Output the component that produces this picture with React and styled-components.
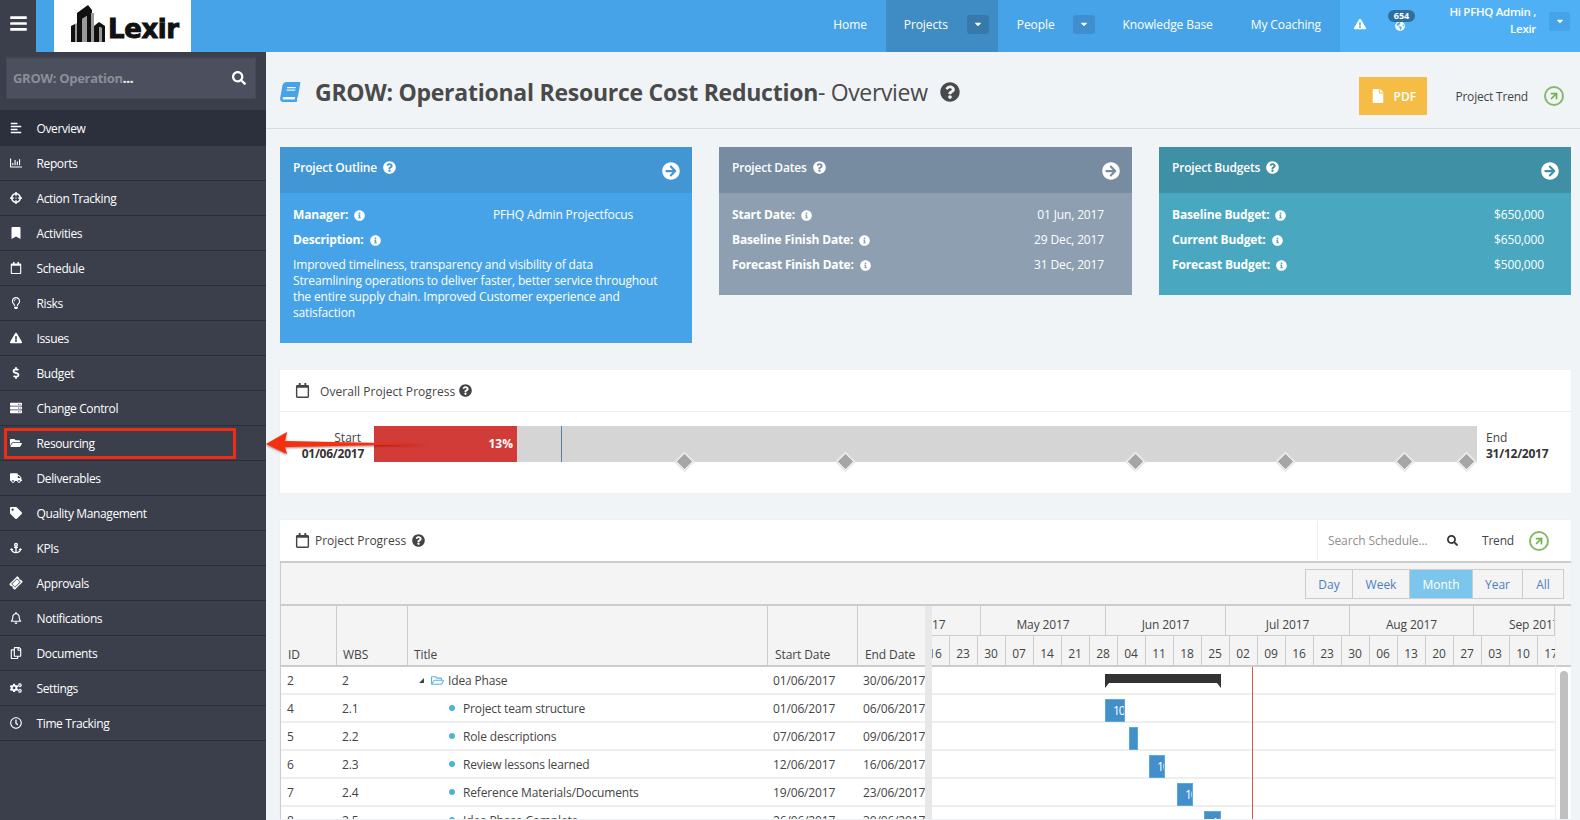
import React from "react";
import styled, { createGlobalStyle } from "styled-components";
import {
  FaAlignLeft, FaAnchor, FaArrowCircleRight, FaBars, FaBook, FaBookmark, FaCaretDown, FaCogs,
  FaCrosshairs, FaDollarSign, FaExclamationTriangle, FaFile, FaFolderOpen, FaGlobeAmericas,
  FaInfoCircle, FaQuestionCircle, FaRegBell, FaRegCalendar, FaRegChartBar, FaRegClock, FaRegCopy,
  FaRegFolderOpen, FaRegLightbulb, FaSearch, FaServer, FaTag, FaTicketAlt, FaTruck,
} from "react-icons/fa";
import { ArrowUpRight } from "lucide-react";

const GlobalStyle = createGlobalStyle`
  html, body { margin: 0; padding: 0; height: 820px; overflow: hidden; }
  body { font-family: "Open Sans", "Liberation Sans", sans-serif; font-size: 12px; color: #444; background: #f1f4f7; }
  * { box-sizing: border-box; }
`;

const Page = styled.div`
  position: relative;
  width: 1580px;
  height: 820px;
  overflow: hidden;
  display: flex;
  flex-direction: column;
`;

const TopBar = styled.header`
  flex: 0 0 52px;
  display: flex;
  background: #47a3e8;
  color: #fff;
`;

const Burger = styled.div`
  width: 36px;
  padding-bottom: 5px;
  background: #3b3f4c;
  display: flex;
  align-items: center;
  justify-content: center;
  font-size: 19px;
`;

const LogoBox = styled.div`
  width: 137px;
  margin-left: 18px;
  background: #fff;
  display: flex;
  align-items: flex-end;
  padding: 0 0 10px 16px;
  gap: 2px;
`;

const LogoText = styled.span`
  font-family: "DejaVu Sans", sans-serif;
  font-weight: 700;
  font-size: 26px;
  line-height: 26px;
  letter-spacing: -0.4px;
  color: #111;
  -webkit-text-stroke: 0.9px #111;
`;

const Nav = styled.nav`
  margin-left: auto;
  display: flex;
`;

const NavItem = styled.div`
  display: flex;
  align-items: center;
  height: 52px;
  padding: ${(p) => (p.$menu ? `0 9px 4px ${p.$active ? 18 : 19}px` : "0 19px 4px")};
  gap: ${(p) => (p.$active ? 19 : 18)}px;
  font-size: 12px;
  letter-spacing: -0.1px;
  background: ${(p) => (p.$active ? "#3f8cc4" : "transparent")};
`;

const CaretButton = styled.span`
  width: 22px;
  height: 19px;
  border-radius: 3px;
  background: ${(p) => (p.$active ? "#3779aa" : "#3f8fd0")};
  display: flex;
  align-items: center;
  justify-content: center;
  font-size: 10px;
`;

const UserZone = styled.div`
  width: 240px;
  padding-bottom: 4px;
  background: #4fb0f5;
  display: flex;
  align-items: center;
`;

const ZoneIcon = styled.span`
  width: 40px;
  padding-top: ${(p) => p.$drop || 0}px;
  display: flex;
  justify-content: center;
  font-size: ${(p) => p.$size}px;
  position: relative;
`;

const Badge = styled.span`
  position: absolute;
  top: -8px;
  left: 8px;
  width: 27px;
  height: 12px;
  border-radius: 7px;
  background: #2f6f9f;
  font-size: 9px;
  font-weight: 700;
  line-height: 12px;
  text-align: center;
`;

const UserName = styled.div`
  width: 116px;
  margin-bottom: 8px;
  text-align: right;
  font-size: 11.5px;
  font-weight: 600;
  line-height: 17px;
  letter-spacing: -0.3px;
`;

const UserCaret = styled(CaretButton)`
  width: 21px;
  margin: 0 0 6px 13px;
  background: #47a3e8;
`;

const Body = styled.div`
  flex: 1;
  display: flex;
  min-height: 0;
`;

const Sidebar = styled.aside`
  width: 266px;
  flex: none;
  background: #3b3f4c;
  padding-top: 5px;
`;

const SearchBox = styled.div`
  margin: 0 10px 0 6px;
  height: 42px;
  background: #4c505e;
  border: 1px solid #454855;
  border-top-width: 2px;
  display: flex;
  align-items: center;
  justify-content: space-between;
  padding: 0 9px 2px 6px;
  color: #fff;
  font-size: 14px;
`;

const SearchText = styled.span`
  font-size: 13px;
  font-weight: 700;
  color: #8b8e97;
  letter-spacing: -0.3px;
  b { color: #e8e8ea; }
`;

const Menu = styled.ul`
  list-style: none;
  margin: 11px 0 0;
  padding: 0;
`;

const MenuItem = styled.li`
  height: ${(p) => (p.$active ? 36 : 35)}px;
  padding: ${(p) => (p.$active ? "1px" : "0")} 0 0 10px;
  display: flex;
  align-items: center;
  color: #fff;
  font-size: 12px;
  letter-spacing: -0.38px;
  background: ${(p) => (p.$active ? "#2c2f3c" : "transparent")};
  border-bottom: 1px solid ${(p) => (p.$active ? "#2c2f3c" : "#2b2e39")};
`;

const MenuIcon = styled.span`
  width: 26.5px;
  flex: none;
  display: flex;
  font-size: 12px;
  svg { transform: rotate(${(p) => p.$tilt || 0}deg); }
`;

const Main = styled.main`
  flex: 1;
  min-width: 0;
`;

const TitleRow = styled.div`
  height: 77px;
  border-bottom: 1px solid #d5dde5;
  display: flex;
  align-items: center;
  padding: 12px 16px 0 14px;
`;

const BookIcon = styled.span`
  display: flex;
  color: #47a3e8;
  font-size: 20px;
  margin: 0 15px 9px 0;
  transform: skewX(-10deg);
`;

const Title = styled.h1`
  margin: 0 0 8px;
  font-size: 23px;
  line-height: 30px;
  font-weight: 400;
  color: #4a4a4a;
  letter-spacing: -0.35px;
  b { font-weight: 700; letter-spacing: -0.25px; }
`;

const TitleHelp = styled.span`
  display: flex;
  margin: 0 0 8px 12px;
  font-size: 20px;
  color: #4a4a4a;
`;

const PdfButton = styled.div`
  margin-left: auto;
  width: 68px;
  height: 38px;
  background: #f6bd46;
  color: #fff;
  font-weight: 600;
  display: flex;
  align-items: center;
  justify-content: center;
  gap: 9px;
  font-size: 12px;
  svg { font-size: 14px; }
`;

const TrendLink = styled.div`
  display: flex;
  align-items: center;
  margin-left: ${(p) => p.$gap}px;
  gap: ${(p) => p.$inner}px;
  color: #444;
  font-size: 12px;
  letter-spacing: -0.2px;
`;

const TrendCircle = styled.span`
  width: 20px;
  height: 20px;
  border: 2px solid #83bb6b;
  border-radius: 50%;
  color: #6fb34f;
  display: flex;
  align-items: center;
  justify-content: center;
`;

const Cards = styled.section`
  display: grid;
  grid-template-columns: 412px 413px 412px;
  gap: 27px;
  align-items: start;
  padding: 18px 9px 0 14px;
`;

const Card = styled.article`
  background: ${(p) => p.$body};
  color: #fff;
  height: ${(p) => p.$height}px;
`;

const CardHead = styled.div`
  height: 46px;
  background: ${(p) => p.$head};
  display: flex;
  justify-content: space-between;
  padding: 13px 12px 0 13px;
  font-weight: 600;
  font-size: 12px;
  letter-spacing: -0.2px;
  line-height: 16px;
`;

const HelpLabel = styled.span`
  display: flex;
  align-items: center;
  height: 16px;
  gap: 6px;
  svg { font-size: 13px; margin-top: -2px; }
`;

const ArrowIcon = styled.span`
  display: flex;
  font-size: 18px;
  margin-top: 2px;
`;

const CardBody = styled.div`
  padding: 13px ${(p) => p.$right || 28}px 0 13px;
  letter-spacing: -0.15px;
`;

const InfoRow = styled.div`
  display: flex;
  justify-content: space-between;
  height: 25px;
  line-height: 18px;
  font-size: 12px;
`;

const InfoLabel = styled.span`
  display: flex;
  align-items: center;
  height: 18px;
  gap: 6px;
  font-weight: 700;
  width: ${(p) => (p.$wide ? "200px" : "auto")};
  svg { font-size: 11px; }
`;

const InfoValue = styled.span`
  flex: ${(p) => (p.$left ? "1" : "none")};
`;

const CardText = styled.p`
  margin: 1px 0 0;
  line-height: 16px;
  width: 372px;
`;

const Panel = styled.section`
  margin: ${(p) => p.$top}px 9px 0 14px;
  background: #fff;
  box-shadow: 0 0 1px rgba(0, 0, 0, 0.08);
`;

const PanelHead = styled.div`
  height: ${(p) => p.$height}px;
  display: flex;
  align-items: center;
  padding-left: 15px;
  gap: ${(p) => p.$gap}px;
  border-bottom: 1px solid #eceff1;
  font-size: 12px;
  color: #444;
  svg { flex: none; }
`;

const PanelTitle = styled.span`
  padding-top: 2px;
  letter-spacing: 0.05px;
  font-weight: 500;
`;

const CalendarIcon = styled.span`
  display: flex;
  font-size: 15px;
  color: #444;
`;

const SmallHelp = styled.span`
  display: flex;
  font-size: 13px;
  color: #444;
  margin-left: ${(p) => p.$left}px;
`;

const ProgressRow = styled.div`
  height: 81px;
  display: flex;
  padding-top: 14px;
`;

const BarLabel = styled.div`
  width: ${(p) => p.$width}px;
  padding: ${(p) => p.$pad};
  text-align: ${(p) => p.$align};
  line-height: 16px;
  white-space: nowrap;
  b { font-weight: 700; color: #333; letter-spacing: -0.25px; }
`;

const StartWord = styled.span`
  padding-right: 3px;
`;

const ProgressTrack = styled.div`
  width: 1103px;
  height: 36px;
  background: #d5d5d5;
  position: relative;
`;

const ProgressFill = styled.div`
  height: 36px;
  background: #d13b38;
  color: #fff;
  font-weight: 700;
  font-size: 12px;
  line-height: 36px;
  text-align: right;
  padding-right: 4px;
`;

const Tick = styled.span`
  position: absolute;
  top: 0;
  bottom: 0;
  width: 1px;
  background: #5b7f9e;
`;

const Milestone = styled.span`
  position: absolute;
  top: 29px;
  width: 13px;
  height: 13px;
  margin-left: -6.5px;
  background: #a6a6a6;
  border: 1.5px solid #fff;
  outline: 1px solid #e2e2e2;
  transform: rotate(45deg);
`;

const ScheduleHead = styled.div`
  height: 41px;
  display: flex;
  align-items: center;
  padding-left: 15px;
  font-weight: 500;
  color: #444;
`;

const ScheduleTitle = styled.span`
  margin-left: 5px;
  font-size: 12px;
`;

const ScheduleTools = styled.div`
  margin-left: auto;
  width: 254px;
  height: 40px;
  border-left: 1px solid #eceff1;
  padding-left: 10px;
  display: flex;
  align-items: center;
  font-weight: 400;
`;

const Placeholder = styled.span`
  width: 119px;
  color: #8f8f8f;
  font-size: 12px;
  letter-spacing: -0.1px;
  white-space: nowrap;
`;

const ToolSearch = styled.span`
  display: flex;
  font-size: 11px;
  color: #333;
`;

const Grid = styled.div`
  border-top: 2px solid #ccc;
  border-left: 1px solid #ccc;
  height: 258px;
  overflow: hidden;
`;

const Toolbar = styled.div`
  height: 43px;
  background: #f4f4f4;
  border-bottom: 2px solid #ccc;
  display: flex;
  justify-content: flex-end;
  padding: 6px 7px 0 0;
`;

const ViewButton = styled.span`
  height: 30px;
  width: ${(p) => p.$width}px;
  margin-left: -1px;
  border: 1px solid #ccc;
  background: ${(p) => (p.$active ? "#7cc5ec" : "#f4f4f4")};
  color: ${(p) => (p.$active ? "#fff" : "#4a80bf")};
  font-size: 12px;
  line-height: 30px;
  text-align: center;
`;

const GridBody = styled.div`
  display: flex;
`;

const LeftPane = styled.div`
  width: 644px;
  flex: none;
`;

const TableHeadRow = styled.div`
  height: 61px;
  display: flex;
  background: #f4f4f4;
  border-bottom: 2px solid #ccc;
`;

const HeadCell = styled.div`
  width: ${(p) => p.$w}px;
  flex: none;
  border-right: 1px solid #ccc;
  padding: 41px 0 0 ${(p) => p.$pad}px;
  line-height: 16px;
  color: #444;
  letter-spacing: -0.1px;
  &:last-child { border-right: none; }
`;

const TableRow = styled.div`
  height: 28px;
  display: flex;
  align-items: center;
  border-bottom: 2px solid #eee;
  color: #444;
  white-space: nowrap;
  letter-spacing: -0.15px;
`;

const Cell = styled.div`
  width: ${(p) => p.$w}px;
  flex: none;
  padding-left: ${(p) => p.$pad}px;
  display: flex;
  align-items: center;
`;

const TreeArrow = styled.span`
  width: 0;
  height: 0;
  margin-right: 7px;
  border-left: 5px solid transparent;
  border-bottom: 5px solid #444;
`;

const TreeFolder = styled.span`
  display: flex;
  color: #5ab4e0;
  font-size: 13px;
  margin-right: 4px;
`;

const TaskDot = styled.span`
  width: 6px;
  height: 6px;
  border-radius: 50%;
  background: #4fb3d9;
  margin-right: 8px;
`;

const Splitter = styled.div`
  width: 7px;
  flex: none;
  background: #e8e8e8;
`;

const GanttPane = styled.div`
  width: 639px;
  flex: none;
  display: flex;
`;

const GanttChart = styled.div`
  width: 623px;
  flex: none;
  position: relative;
  overflow: hidden;
`;

const MonthRow = styled.div`
  height: 30px;
  display: flex;
  background: #f4f4f4;
  border-bottom: 1px solid #ccc;
`;

const MonthCell = styled.div`
  flex: none;
  width: ${(p) => p.$w}px;
  border-right: 1px solid #ccc;
  padding: 11px 0 0 ${(p) => p.$pad || 0}px;
  line-height: 16px;
  letter-spacing: -0.1px;
  text-align: ${(p) => (p.$pad !== undefined ? "left" : "center")};
  white-space: nowrap;
  overflow: hidden;
`;

const WeekRow = styled.div`
  height: 31px;
  display: flex;
  margin-left: -10.5px;
  background: #f4f4f4;
  border-bottom: 2px solid #ccc;
`;

const WeekCell = styled.div`
  flex: none;
  width: 28px;
  border-right: 1px solid #ccc;
  padding-top: 10px;
  line-height: 16px;
  text-align: center;
`;

const GanttRow = styled.div`
  height: 28px;
  position: relative;
  border-bottom: 2px solid #eee;
`;

const SummaryBar = styled.div`
  position: absolute;
  top: 7px;
  height: 9px;
  background: #333;
  &::before, &::after {
    content: "";
    position: absolute;
    top: 9px;
    border-top: 5px solid #333;
  }
  &::before { left: 0; border-right: 4px solid transparent; }
  &::after { right: 0; border-left: 4px solid transparent; }
`;

const TaskBar = styled.div`
  position: absolute;
  top: 4px;
  height: 23px;
  background: #428fc9;
  border: 1px solid #5aa9e0;
  color: #fff;
  font-size: 12px;
  line-height: 21px;
  letter-spacing: -1px;
  padding-left: 7px;
  overflow: hidden;
  white-space: nowrap;
`;

const TodayLine = styled.div`
  position: absolute;
  top: 61px;
  bottom: 0;
  width: 1px;
  background: #d9534f;
`;

const ScrollColumn = styled.div`
  width: 16px;
  flex: none;
  border-left: 1px solid #eee;
  background: #fff;
`;

const ScrollHead = styled.div`
  height: 61px;
  background: #f4f4f4;
  border-bottom: 2px solid #ccc;
`;

const ScrollThumb = styled.div`
  width: 8px;
  height: 200px;
  margin: 4px 0 0 4px;
  border-radius: 4px;
  background: #c0c0c0;
`;

const Highlight = styled.div`
  position: absolute;
  left: 4px;
  top: 428px;
  width: 232px;
  height: 31px;
  border: 3px solid #f02d14;
  border-radius: 1px;
`;

const ArrowOverlay = styled.svg`
  position: absolute;
  left: 264px;
  top: 430px;
  filter: drop-shadow(0 1px 1px rgba(90, 0, 0, 0.55));
`;

const menu = [
  ["Overview", FaAlignLeft], ["Reports", FaRegChartBar], ["Action Tracking", FaCrosshairs],
  ["Activities", FaBookmark], ["Schedule", FaRegCalendar], ["Risks", FaRegLightbulb],
  ["Issues", FaExclamationTriangle], ["Budget", FaDollarSign], ["Change Control", FaServer],
  ["Resourcing", FaFolderOpen], ["Deliverables", FaTruck], ["Quality Management", FaTag],
  ["KPIs", FaAnchor], ["Approvals", FaTicketAlt, -45], ["Notifications", FaRegBell],
  ["Documents", FaRegCopy], ["Settings", FaCogs], ["Time Tracking", FaRegClock],
];

const dates = [
  ["Start Date:", "01 Jun, 2017"],
  ["Baseline Finish Date:", "29 Dec, 2017"],
  ["Forecast Finish Date:", "31 Dec, 2017"],
];

const budgets = [
  ["Baseline Budget:", "$650,000"],
  ["Current Budget:", "$650,000"],
  ["Forecast Budget:", "$500,000"],
];

const milestones = [310, 471, 761, 911, 1030, 1092];

const columns = [
  { label: "ID", w: 56, pad: 7 },
  { label: "WBS", w: 71, pad: 6 },
  { label: "Title", w: 360, pad: 6 },
  { label: "Start Date", w: 90, pad: 7 },
  { label: "End Date", w: 67, pad: 7 },
];

const tasks = [
  ["4", "2.1", "Project team structure", "01/06/2017", "06/06/2017"],
  ["5", "2.2", "Role descriptions", "07/06/2017", "09/06/2017"],
  ["6", "2.3", "Review lessons learned", "12/06/2017", "16/06/2017"],
  ["7", "2.4", "Reference Materials/Documents", "19/06/2017", "23/06/2017"],
  ["8", "2.5", "Idea Phase Complete", "26/06/2017", "30/06/2017"],
];

const months = [
  ["17", 49, 0], ["May 2017", 125], ["Jun 2017", 120], ["Jul 2017", 124],
  ["Aug 2017", 124], ["Sep 2017", 81, 35],
];

const weeks = ["16", "23", "30", "07", "14", "21", "28", "04", "11", "18", "25", "02", "09", "16", "23", "30", "06", "13", "20", "27", "03", "10", "17"];

// left and width in px from the start of the chart
const bars = [
  { left: 173, width: 20, label: "10" },
  { left: 197, width: 8, label: "" },
  { left: 217, width: 16, label: "10" },
  { left: 245, width: 16, label: "10" },
  { left: 272, width: 17, label: "10" },
];

const views = [["Day", 48], ["Week", 58], ["Month", 64], ["Year", 51], ["All", 42]];

function ScheduleTable() {
  return (
    <LeftPane>
      <TableHeadRow>
        {columns.map((c) => (
          <HeadCell key={c.label} $w={c.w} $pad={c.pad}>{c.label}</HeadCell>
        ))}
      </TableHeadRow>
      <TableRow>
        <Cell $w={56} $pad={6}>2</Cell>
        <Cell $w={71} $pad={5}>2</Cell>
        <Cell $w={360} $pad={11}>
          <TreeArrow />
          <TreeFolder><FaRegFolderOpen /></TreeFolder>
          Idea Phase
        </Cell>
        <Cell $w={90} $pad={5}>01/06/2017</Cell>
        <Cell $w={67} $pad={5}>30/06/2017</Cell>
      </TableRow>
      {tasks.map((t) => (
        <TableRow key={t[0]}>
          <Cell $w={56} $pad={6}>{t[0]}</Cell>
          <Cell $w={71} $pad={5}>{t[1]}</Cell>
          <Cell $w={360} $pad={41}><TaskDot />{t[2]}</Cell>
          <Cell $w={90} $pad={5}>{t[3]}</Cell>
          <Cell $w={67} $pad={5}>{t[4]}</Cell>
        </TableRow>
      ))}
    </LeftPane>
  );
}

function Gantt() {
  return (
    <GanttPane>
      <GanttChart>
        <MonthRow>
          {months.map((m) => (
            <MonthCell key={m[0]} $w={m[1]} $pad={m[2]}>{m[0]}</MonthCell>
          ))}
        </MonthRow>
        <WeekRow>
          {weeks.map((w, i) => <WeekCell key={i}>{w}</WeekCell>)}
        </WeekRow>
        <GanttRow>
          <SummaryBar style={{ left: 173, width: 116 }} />
        </GanttRow>
        {bars.map((b, i) => (
          <GanttRow key={i}>
            <TaskBar style={{ left: b.left, width: b.width }}>{b.label}</TaskBar>
          </GanttRow>
        ))}
        <TodayLine style={{ left: 320 }} />
      </GanttChart>
      <ScrollColumn>
        <ScrollHead />
        <ScrollThumb />
      </ScrollColumn>
    </GanttPane>
  );
}

export default function App() {
  return (
    <Page>
      <GlobalStyle />
      <TopBar>
        <Burger><FaBars /></Burger>
        <LogoBox>
          <svg width="36" height="37" viewBox="0 0 36 37">
            <path d="M1 37V21l4-2v18zM7 37V8l11-8 4 5v32h-5V11l-5 3v23zM24 37V21l5-4 6 4v16h-3V23l-3-1v15z" fill="#111" />
            <path d="M5 37V19l2-1v19zM12 37V14l5-3v26zM21 37V8l3 0v29zM29 37V22l3 1v14z" fill="#9a9a9a" />
          </svg>
          <LogoText>Lexir</LogoText>
        </LogoBox>
        <Nav>
          <NavItem>Home</NavItem>
          <NavItem $menu $active>Projects<CaretButton $active><FaCaretDown /></CaretButton></NavItem>
          <NavItem $menu>People<CaretButton><FaCaretDown /></CaretButton></NavItem>
          <NavItem>Knowledge Base</NavItem>
          <NavItem>My Coaching</NavItem>
        </Nav>
        <UserZone>
          <ZoneIcon $size={12}><FaExclamationTriangle /></ZoneIcon>
          <ZoneIcon $size={10} $drop={3}>
            <FaGlobeAmericas />
            <Badge>654</Badge>
          </ZoneIcon>
          <UserName>Hi PFHQ Admin ,<br />Lexir</UserName>
          <UserCaret><FaCaretDown /></UserCaret>
        </UserZone>
      </TopBar>
      <Body>
        <Sidebar>
          <SearchBox>
            <SearchText>GROW: Operation<b>...</b></SearchText>
            <FaSearch />
          </SearchBox>
          <Menu>
            {menu.map(([label, Icon, tilt], i) => (
              <MenuItem key={label} $active={i === 0}>
                <MenuIcon $tilt={tilt}><Icon /></MenuIcon>
                {label}
              </MenuItem>
            ))}
          </Menu>
        </Sidebar>
        <Main>
          <TitleRow>
            <BookIcon><FaBook /></BookIcon>
            <Title><b>GROW: Operational Resource Cost Reduction</b>- Overview</Title>
            <TitleHelp><FaQuestionCircle /></TitleHelp>
            <PdfButton><FaFile />PDF</PdfButton>
            <TrendLink $gap={28} $inner={16}>
              Project Trend
              <TrendCircle><ArrowUpRight size={12} strokeWidth={3.5} /></TrendCircle>
            </TrendLink>
          </TitleRow>
          <Cards>
            <Card $body="#47a3e8" $height={196}>
              <CardHead $head="#4296d3">
                <HelpLabel>Project Outline <FaQuestionCircle /></HelpLabel>
                <ArrowIcon><FaArrowCircleRight /></ArrowIcon>
              </CardHead>
              <CardBody>
                <InfoRow>
                  <InfoLabel $wide>Manager: <FaInfoCircle /></InfoLabel>
                  <InfoValue $left>PFHQ Admin Projectfocus</InfoValue>
                </InfoRow>
                <InfoRow>
                  <InfoLabel $wide>Description: <FaInfoCircle /></InfoLabel>
                </InfoRow>
                <CardText>
                  Improved timeliness, transparency and visibility of data<br />
                  Streamlining operations to deliver faster, better service throughout the entire supply chain. Improved Customer experience and satisfaction
                </CardText>
              </CardBody>
            </Card>
            <Card $body="#8d9fb0" $height={148}>
              <CardHead $head="#778ca1">
                <HelpLabel>Project Dates <FaQuestionCircle /></HelpLabel>
                <ArrowIcon><FaArrowCircleRight /></ArrowIcon>
              </CardHead>
              <CardBody>
                {dates.map(([k, v]) => (
                  <InfoRow key={k}>
                    <InfoLabel>{k} <FaInfoCircle /></InfoLabel>
                    <InfoValue>{v}</InfoValue>
                  </InfoRow>
                ))}
              </CardBody>
            </Card>
            <Card $body="#49a7c0" $height={148}>
              <CardHead $head="#3f8fa5">
                <HelpLabel>Project Budgets <FaQuestionCircle /></HelpLabel>
                <ArrowIcon><FaArrowCircleRight /></ArrowIcon>
              </CardHead>
              <CardBody $right={27}>
                {budgets.map(([k, v]) => (
                  <InfoRow key={k}>
                    <InfoLabel>{k} <FaInfoCircle /></InfoLabel>
                    <InfoValue>{v}</InfoValue>
                  </InfoRow>
                ))}
              </CardBody>
            </Card>
          </Cards>
          <Panel $top={27}>
            <PanelHead $height={42} $gap={10}>
              <CalendarIcon><FaRegCalendar /></CalendarIcon>
              <PanelTitle>Overall Project Progress</PanelTitle>
              <SmallHelp $left={-6}><FaQuestionCircle /></SmallHelp>
            </PanelHead>
            <ProgressRow>
              <BarLabel $width={94} $pad="4px 10px 0 0" $align="right">
                <StartWord>Start</StartWord><br /><b>01/06/2017</b>
              </BarLabel>
              <ProgressTrack>
                <ProgressFill style={{ width: 143 }}>13%</ProgressFill>
                <Tick style={{ left: 187 }} />
                {milestones.map((m) => <Milestone key={m} style={{ left: m }} />)}
              </ProgressTrack>
              <BarLabel $width={90} $pad="4px 0 0 9px" $align="left">
                End<br /><b>31/12/2017</b>
              </BarLabel>
            </ProgressRow>
          </Panel>
          <Panel $top={27}>
            <ScheduleHead>
              <CalendarIcon><FaRegCalendar /></CalendarIcon>
              <ScheduleTitle>Project Progress</ScheduleTitle>
              <SmallHelp $left={6}><FaQuestionCircle /></SmallHelp>
              <ScheduleTools>
                <Placeholder>Search Schedule...</Placeholder>
                <ToolSearch><FaSearch /></ToolSearch>
                <TrendLink $gap={24} $inner={15}>
                  Trend
                  <TrendCircle><ArrowUpRight size={12} strokeWidth={3.5} /></TrendCircle>
                </TrendLink>
              </ScheduleTools>
            </ScheduleHead>
            <Grid>
              <Toolbar>
                {views.map(([v, w]) => (
                  <ViewButton key={v} $width={w} $active={v === "Month"}>{v}</ViewButton>
                ))}
              </Toolbar>
              <GridBody>
                <ScheduleTable />
                <Splitter />
                <Gantt />
              </GridBody>
            </Grid>
          </Panel>
        </Main>
      </Body>
      <Highlight />
      <ArrowOverlay width="168" height="30" viewBox="0 0 168 30">
        <path d="M2 14 L23 2 L21 11 L165 14 L21 17 L23 24 Z" fill="#f4300f" />
      </ArrowOverlay>
    </Page>
  );
}
